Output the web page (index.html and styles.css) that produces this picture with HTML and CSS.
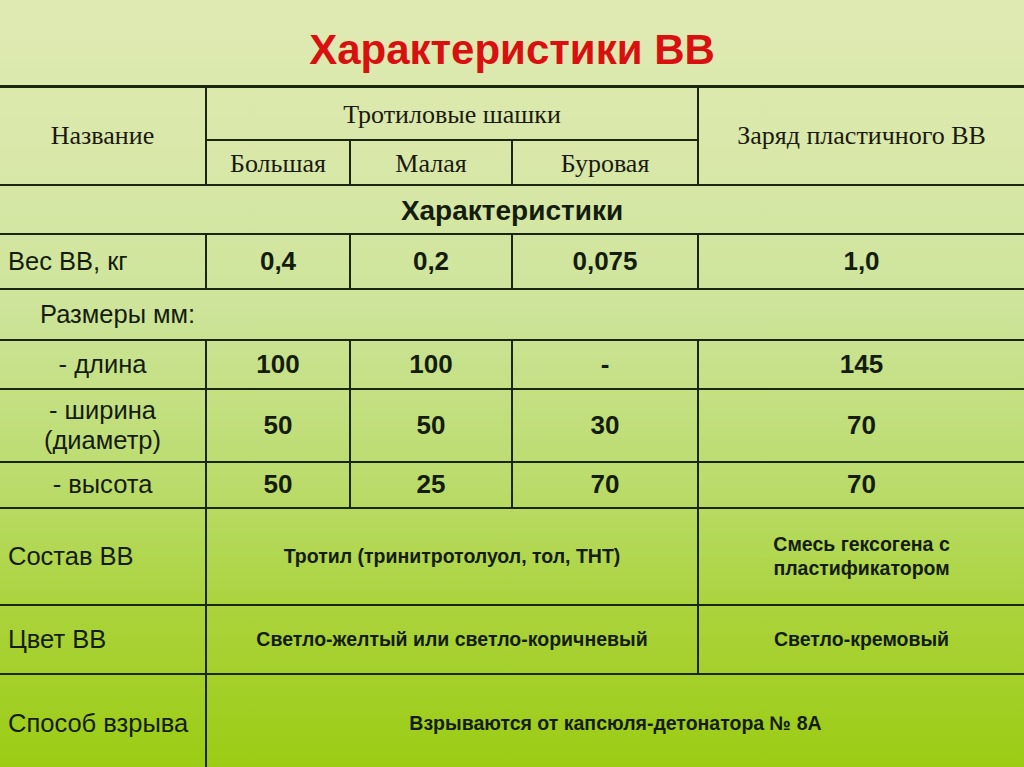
FILE: index.html
```html
<!DOCTYPE html>
<html lang="ru">
<head>
<meta charset="utf-8">
<title>Характеристики ВВ</title>
<link rel="stylesheet" href="styles.css">
</head>
<body>
<div class="slide">
  <h1 class="title">Характеристики ВВ</h1>
  <table class="grid">
    <colgroup>
      <col class="c1"><col class="c2"><col class="c3"><col class="c4"><col class="c5">
    </colgroup>
    <tr class="h1">
      <td class="serif" rowspan="2">Название</td>
      <td class="serif top" colspan="3">Тротиловые шашки</td>
      <td class="serif" rowspan="2">Заряд пластичного ВВ</td>
    </tr>
    <tr class="h2">
      <td class="serif">Большая</td>
      <td class="serif">Малая</td>
      <td class="serif">Буровая</td>
    </tr>
    <tr class="r-char">
      <td class="section" colspan="5">Характеристики</td>
    </tr>
    <tr class="r-ves">
      <td class="label">Вес ВВ, кг</td>
      <td class="num">0,4</td>
      <td class="num">0,2</td>
      <td class="num">0,075</td>
      <td class="num">1,0</td>
    </tr>
    <tr class="r-size">
      <td class="label indent" colspan="5">Размеры мм:</td>
    </tr>
    <tr class="r-len">
      <td class="sub">- длина</td>
      <td class="num">100</td>
      <td class="num">100</td>
      <td class="num">-</td>
      <td class="num">145</td>
    </tr>
    <tr class="r-wid">
      <td class="sub">- ширина<br>(диаметр)</td>
      <td class="num">50</td>
      <td class="num">50</td>
      <td class="num">30</td>
      <td class="num">70</td>
    </tr>
    <tr class="r-hei">
      <td class="sub">- высота</td>
      <td class="num">50</td>
      <td class="num">25</td>
      <td class="num">70</td>
      <td class="num">70</td>
    </tr>
    <tr class="r-comp">
      <td class="label">Состав ВВ</td>
      <td class="text" colspan="3">Тротил (тринитротолуол, тол, ТНТ)</td>
      <td class="text">Смесь гексогена с<br>пластификатором</td>
    </tr>
    <tr class="r-color">
      <td class="label">Цвет ВВ</td>
      <td class="text" colspan="3">Светло-желтый или светло-коричневый</td>
      <td class="text">Светло-кремовый</td>
    </tr>
    <tr class="r-way">
      <td class="label">Способ взрыва</td>
      <td class="text" colspan="4">Взрываются от капсюля-детонатора № 8А</td>
    </tr>
  </table>
</div>
</body>
</html>
```

FILE: styles.css
```css
html, body {
  margin: 0;
  padding: 0;
}
body {
  width: 1024px;
  height: 767px;
  overflow: hidden;
  background: linear-gradient(to bottom, #dfeab3 0%, #d9e8a9 20%, #cde49a 40%, #bcdc6e 62%, #aad33a 80%, #9ccc14 100%);
  font-family: "Liberation Sans", Arial, sans-serif;
  color: #141c0c;
}
.slide {
  width: 1024px;
}
.title {
  margin: 0;
  height: 85px;
  display: flex;
  align-items: center;
  justify-content: center;
  padding-top: 14px;
  box-sizing: border-box;
  font-family: "Liberation Sans", Arial, sans-serif;
  font-weight: bold;
  font-size: 42px;
  line-height: 1;
  color: #d81010;
}
.grid {
  width: 1024px;
  table-layout: fixed;
  border-collapse: collapse;
  border-top: 3px solid #1b2610;
  border-left: hidden;
  border-right: hidden;
  border-bottom: hidden;
}
.c1 { width: 206px; }
.c2 { width: 144px; }
.c3 { width: 162px; }
.c4 { width: 186px; }
.c5 { width: 326px; }
.grid td {
  border: 2px solid #1b2610;
  padding: 0;
  text-align: center;
  vertical-align: middle;
}
.serif {
  font-family: "Liberation Serif", "Times New Roman", serif;
  font-size: 26px;
  color: #1a1a10;
}
.h1 .serif.top { padding-top: 3px; }
.h2 .serif { padding-top: 4px; }
.h1 { height: 53px; }
.h2 { height: 45px; }
.r-char { height: 49px; }
.r-ves { height: 55px; }
.r-size { height: 51px; }
.r-len { height: 49px; }
.r-wid { height: 73px; }
.r-hei { height: 46px; }
.r-comp { height: 97px; }
.r-color { height: 69px; }
.r-way { height: 98px; }
.section {
  font-weight: bold;
  font-size: 28px;
  padding-top: 4px !important;
}
.label {
  text-align: left !important;
  padding-left: 8px !important;
  font-size: 25.5px;
}
.indent {
  padding-left: 40px !important;
}
.sub {
  font-size: 25.5px;
  line-height: 1.18;
}
.num {
  font-weight: bold;
  font-size: 26px;
}
.text {
  font-weight: bold;
  font-size: 19.5px;
  line-height: 1.25;
}
```
